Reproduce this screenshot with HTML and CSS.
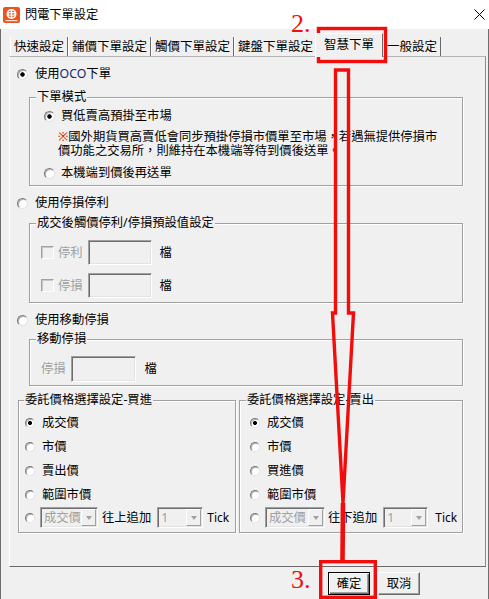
FILE: index.html
```html
<!DOCTYPE html>
<html lang="zh-Hant">
<head>
<meta charset="utf-8">
<title>閃電下單設定</title>
<link rel="stylesheet" href="styles.css">
</head>
<body>
<div class="window">
  <div class="titlebar">
    <svg class="app-icon" viewBox="0 0 17 16">
      <rect width="17" height="16" rx="2" fill="#e8561e"/>
      <circle cx="8.5" cy="7" r="5" fill="#fff"/>
      <circle cx="8.5" cy="7" r="3.4" fill="#e8561e"/>
      <rect x="7.7" y="2.4" width="1.6" height="9.2" fill="#fff"/>
      <rect x="5.6" y="5.6" width="5.8" height="2.6" fill="none" stroke="#fff" stroke-width="1"/>
      <rect x="2.5" y="13" width="12" height="1.2" fill="#fff" opacity="0.8"/>
    </svg>
    <span class="title">閃電下單設定</span>
    <svg class="close" viewBox="0 0 11 11">
      <path d="M0.5 0.5 L10.5 10.5 M10.5 0.5 L0.5 10.5" stroke="#000" stroke-width="1" fill="none"/>
    </svg>
  </div>

  <div class="dialog">
    <div class="tabs">
      <div class="tab">快速設定</div>
      <div class="tab">鋪價下單設定</div>
      <div class="tab">觸價下單設定</div>
      <div class="tab">鍵盤下單設定</div>
      <div class="tab tab-active">智慧下單</div>
      <div class="tab">一般設定</div>
    </div>

    <div class="panel">
      <div class="opt opt-top"><span class="radio checked"></span><span>使用<span class="oco">OCO</span>下單</span></div>

      <fieldset class="group g-wide g-mode">
        <legend>下單模式</legend>
        <div class="opt opt-in"><span class="radio checked"></span><span>買低賣高預掛至市場</span></div>
        <p class="note"><span class="mark">※</span>國外期貨買高賣低會同步預掛停損市價單至市場，若遇無提供停損市<br>價功能之交易所，則維持在本機端等待到價後送單。</p>
        <div class="opt opt-in opt-local"><span class="radio"></span><span>本機端到價後再送單</span></div>
      </fieldset>

      <div class="opt opt-top opt-stop"><span class="radio"></span><span>使用停損停利</span></div>

      <fieldset class="group g-wide g-stop">
        <legend>成交後觸價停利/停損預設值設定</legend>
        <div class="field-row field-row-1">
          <span class="check"></span><span class="dis lbl">停利</span><span class="textbox"></span><span class="unit">檔</span>
        </div>
        <div class="field-row field-row-2">
          <span class="check"></span><span class="dis lbl">停損</span><span class="textbox"></span><span class="unit">檔</span>
        </div>
      </fieldset>

      <div class="opt opt-top opt-trail"><span class="radio"></span><span>使用移動停損</span></div>

      <fieldset class="group g-wide g-trail">
        <legend>移動停損</legend>
        <div class="field-row field-row-trail">
          <span class="dis">停損</span><span class="textbox textbox-trail"></span><span class="unit unit-trail">檔</span>
        </div>
      </fieldset>

      <div class="price-groups">
        <fieldset class="group g-buy">
          <legend>委託價格選擇設定-買進</legend>
          <div class="price-list">
            <div class="price-opt"><span class="radio radio-sm checked"></span><span>成交價</span></div>
            <div class="price-opt"><span class="radio radio-sm"></span><span>市價</span></div>
            <div class="price-opt"><span class="radio radio-sm"></span><span>賣出價</span></div>
            <div class="price-opt"><span class="radio radio-sm"></span><span>範圍市價</span></div>
            <div class="price-last">
              <span class="radio radio-sm"></span>
              <span class="combo combo-base"><span class="combo-text">成交價</span><span class="combo-btn"><span class="arrow"></span></span></span>
              <span class="add-lbl">往上追加</span>
              <span class="combo combo-tick"><span class="combo-text">1</span><span class="combo-btn"><span class="arrow"></span></span></span>
              <span class="tick">Tick</span>
            </div>
          </div>
        </fieldset>
        <fieldset class="group g-sell">
          <legend>委託價格選擇設定-賣出</legend>
          <div class="price-list">
            <div class="price-opt"><span class="radio radio-sm checked"></span><span>成交價</span></div>
            <div class="price-opt"><span class="radio radio-sm"></span><span>市價</span></div>
            <div class="price-opt"><span class="radio radio-sm"></span><span>買進價</span></div>
            <div class="price-opt"><span class="radio radio-sm"></span><span>範圍市價</span></div>
            <div class="price-last">
              <span class="radio radio-sm"></span>
              <span class="combo combo-base"><span class="combo-text">成交價</span><span class="combo-btn"><span class="arrow"></span></span></span>
              <span class="add-lbl">往下追加</span>
              <span class="combo combo-tick"><span class="combo-text">1</span><span class="combo-btn"><span class="arrow"></span></span></span>
              <span class="tick">Tick</span>
            </div>
          </div>
        </fieldset>
      </div>
    </div>

    <div class="buttons">
      <button class="btn btn-default" type="button">確定</button>
      <button class="btn" type="button">取消</button>
    </div>
  </div>
</div>

<svg class="annot" viewBox="0 0 489 599" width="489" height="599">
  <text x="291" y="32" class="annot-num">2.</text>
  <rect x="318.5" y="28.5" width="67" height="33" fill="none" stroke="#f20d0d" stroke-width="3.4"/>
  <polygon points="335.5,70 348.5,70 348.5,313 353.5,313 343,503 332.5,313 335.5,313" fill="none" stroke="#f20d0d" stroke-width="3.4" stroke-linejoin="miter"/>
  <line x1="343" y1="503" x2="342.5" y2="561" stroke="#f20d0d" stroke-width="4.6"/>
  <text x="291" y="588" class="annot-num">3.</text>
  <rect x="320.7" y="561.7" width="54.6" height="35.6" fill="none" stroke="#f20d0d" stroke-width="3.4"/>
</svg>
</body>
</html>
```

FILE: styles.css
```css
* { box-sizing: border-box; }
html, body { margin: 0; padding: 0; }
body {
  width: 489px;
  height: 599px;
  overflow: hidden;
  position: relative;
  background: #f0f0f0;
  color: #000;
  font-family: "Noto Sans", "Noto Sans CJK TC", sans-serif;
  font-size: 12.3px;
  line-height: 14px;
}
.window { width: 489px; height: 599px; display: flex; flex-direction: column; }

.titlebar { height: 29px; flex: none; background: #fff; display: flex; align-items: center; }
.app-icon { width: 17px; height: 16px; margin-left: 3px; flex: none; }
.title { margin-left: 5px; font-size: 12.2px; line-height: 16px; }
.close { width: 11px; height: 11px; margin-left: auto; margin-right: 4px; }

.dialog {
  flex: 1;
  display: flex;
  flex-direction: column;
  background: #f0f0f0;
  border-left: 1px solid #6e6e6e;
  border-right: 1px solid #6e6e6e;
}

.tabs { height: 27px; flex: none; display: flex; align-items: flex-end; padding-left: 9px; }
.tab {
  height: 19px;
  line-height: 19px;
  font-size: 12.5px;
  padding: 0 3px;
  border-left: 1px solid #fff;
  border-right: 1px solid #696969;
  white-space: nowrap;
}
.tab-active {
  height: 24px;
  line-height: 22px;
  padding: 0 8px;
  margin-left: -2px;
  margin-bottom: -1px;
  position: relative;
  z-index: 1;
  background: #f0f0f0;
  border-top: 1px solid #fff;
}

.panel {
  flex: none;
  width: 477px;
  height: 511px;
  margin-left: 8px;
  padding-top: 7px;
  display: flex;
  flex-direction: column;
  border: 1px solid;
  border-color: #b4b4b4 #8c8c8c #696969 #fff;
}

.opt { display: flex; align-items: center; height: 20px; gap: 7px; white-space: nowrap; }
.opt-top { padding-left: 7px; }
.oco { color: #14286e; }

.radio {
  flex: none;
  width: 11px;
  height: 11px;
  border-radius: 50%;
  border: 1px solid;
  border-color: #7a7a7a #e3e3e3 #e3e3e3 #7a7a7a;
  background: #fff;
  box-shadow: inset 1px 1px 0 #b0b0b0;
}
.radio.checked { background: radial-gradient(circle, #000 0 1.9px, #fff 2.5px); }
.radio-sm { width: 10px; height: 10px; }
.radio-sm.checked { background: radial-gradient(circle, #000 0 1.7px, #fff 2.3px); }

.group {
  margin: 0;
  padding: 0;
  min-width: 0;
  border: 1px solid #a0a0a0;
  box-shadow: inset 1px 1px 0 #fff, 1px 1px 0 #fff;
}
.group legend {
  margin-left: 6px;
  padding: 0 1px;
  line-height: 14px;
  background: #f0f0f0;
  white-space: nowrap;
}
.g-wide { margin-left: 19px; width: 434px; }

.g-mode { margin-top: 6px; padding-bottom: 2px; }
.opt-in { margin-top: 2px; padding-left: 14px; gap: 6px; }
.note { margin: 4px 0 0 28px; line-height: 14px; white-space: nowrap; }
.mark { color: #e01010; }
.opt-local { margin-top: 5px; }

.opt-stop { margin-top: 7px; }
.g-stop { margin-top: 3px; padding-bottom: 4px; }
.field-row { display: flex; align-items: center; height: 25px; padding-left: 11px; white-space: nowrap; }
.field-row-1 { margin-top: 10px; }
.field-row-2 { margin-top: 8px; }
.check {
  flex: none;
  width: 13px;
  height: 13px;
  border: 1px solid;
  border-color: #a0a0a0 #fff #fff #a0a0a0;
  box-shadow: inset 1px 1px 0 #c8c8c8;
  background: #f0f0f0;
}
.dis { color: #a0a0a0; }
.lbl { margin-left: 4px; }
.textbox {
  flex: none;
  width: 64px;
  height: 25px;
  margin-left: 5px;
  border: 1px solid;
  border-color: #a0a0a0 #fff #fff #a0a0a0;
  box-shadow: inset 1px 1px 0 #6e6e6e, inset -1px -1px 0 #e3e3e3;
  background: #f0f0f0;
}
.unit { margin-left: 8px; }

.opt-trail { margin-top: 7px; }
.g-trail { margin-top: 2px; padding-bottom: 3px; }
.field-row-trail { margin-top: 10px; height: 26px; }
.textbox-trail { width: 65px; height: 26px; }
.unit-trail { margin-left: 9px; }

.price-groups { display: flex; gap: 3px; margin-top: 7px; margin-left: 8px; }
.g-buy { width: 218px; padding-bottom: 4px; }
.g-sell { width: 224px; padding-bottom: 4px; }
.g-buy legend { margin-left: 5px; }
.price-list { margin-top: 4px; display: flex; flex-direction: column; }
.price-opt { height: 24px; display: flex; align-items: center; gap: 7px; padding-left: 6px; white-space: nowrap; }
.g-sell .price-opt { padding-left: 10px; }
.price-last { height: 21px; display: flex; align-items: center; padding-left: 6px; white-space: nowrap; }
.g-sell .price-last { padding-left: 10px; }

.combo {
  flex: none;
  height: 21px;
  display: flex;
  align-items: center;
  padding: 0 1px 0 3px;
  border: 1px solid;
  border-color: #a0a0a0 #fff #fff #a0a0a0;
  box-shadow: inset 1px 1px 0 #6e6e6e, inset -1px -1px 0 #e3e3e3;
  background: #f0f0f0;
  color: #a0a0a0;
}
.combo-text { flex: 1; line-height: 17px; }
.combo-btn {
  flex: none;
  width: 15px;
  height: 17px;
  display: flex;
  align-items: center;
  justify-content: center;
  border: 1px solid;
  border-color: #fff #a0a0a0 #a0a0a0 #fff;
  background: #f0f0f0;
}
.arrow {
  width: 0;
  height: 0;
  border-left: 3.5px solid transparent;
  border-right: 3.5px solid transparent;
  border-top: 4px solid #a0a0a0;
}
.combo-base { width: 58px; margin-left: 5px; }
.combo-tick { width: 46px; margin-left: 6px; }
.add-lbl { margin-left: 4px; }
.tick { margin-left: 4px; font-family: "Noto Sans", sans-serif; font-size: 12px; }
.g-sell .combo-base { width: 60px; }
.g-sell .add-lbl { margin-left: 3px; }
.g-sell .combo-tick { width: 45px; }
.g-sell .tick { margin-left: 7px; }

.buttons { flex: none; display: flex; justify-content: flex-end; gap: 8px; margin-top: 5px; padding-right: 68px; }
.btn {
  width: 42px;
  height: 23px;
  padding: 0;
  font-family: "Noto Sans", "Noto Sans CJK TC", sans-serif;
  font-size: 12.3px;
  line-height: 19px;
  color: #000;
  background: #f0f0f0;
  border: 1px solid;
  border-color: #fff #696969 #696969 #fff;
  box-shadow: inset -1px -1px 0 #a0a0a0;
}
.btn-default {
  border-color: #000;
  box-shadow: inset 1px 1px 0 #fff, inset -1px -1px 0 #696969, inset -2px -2px 0 #a0a0a0;
}

.annot { position: absolute; left: 0; top: 0; width: 489px; height: 599px; pointer-events: none; }
.annot-num { font-family: "Liberation Serif", "Times New Roman", serif; font-size: 26px; fill: #f20d0d; }
```
